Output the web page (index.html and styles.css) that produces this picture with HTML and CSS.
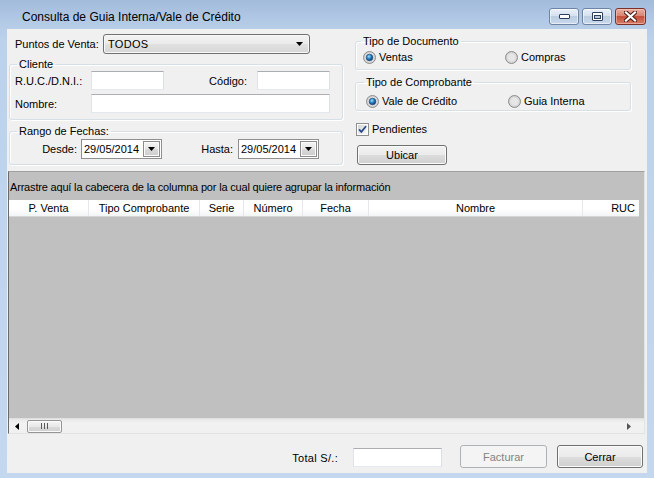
FILE: index.html
```html
<!DOCTYPE html>
<html lang="es">
<head>
<meta charset="utf-8">
<title>Consulta de Guia Interna/Vale de Crédito</title>
<link rel="stylesheet" href="styles.css">
</head>
<body>
<div class="window">
  <div class="titlebar">
    <span class="title">Consulta de Guia Interna/Vale de Crédito</span>
    <div class="caption-btns">
      <span class="cbtn">
        <svg width="11" height="5" viewBox="0 0 11 5"><rect x="0.5" y="0.5" width="10" height="4" rx="0.5" fill="#fff" stroke="#2c3f5c"/></svg>
      </span>
      <span class="cbtn">
        <svg width="11" height="9" viewBox="0 0 11 9"><rect x="0.5" y="0.5" width="10" height="8" rx="0.5" fill="#fff" stroke="#2c3f5c"/><rect x="2.5" y="3.5" width="6" height="3" fill="#b8c9e0" stroke="#2c3f5c"/></svg>
      </span>
      <span class="cbtn close">
        <svg width="13" height="11" viewBox="0 0 13 11"><path d="M2 1.5 L11 9.5 M11 1.5 L2 9.5" stroke="#4a1a14" stroke-width="4.2" stroke-linecap="square"/><path d="M2 1.5 L11 9.5 M11 1.5 L2 9.5" stroke="#fff" stroke-width="2.2" stroke-linecap="square"/></svg>
      </span>
    </div>
  </div>

  <div class="client">
    <div class="top">
      <div class="left-col">
        <div class="pv-row">
          <span class="pv-lbl">Puntos de Venta:</span>
          <div class="combo">
            <span class="combo-text">TODOS</span>
            <svg class="combo-arrow" width="7" height="4" viewBox="0 0 7 4"><polygon points="0,0 7,0 3.5,4" fill="#000"/></svg>
          </div>
        </div>

        <fieldset class="group cliente">
          <legend>Cliente</legend>
          <div class="frow">
            <span class="lbl w76">R.U.C./D.N.I.:</span>
            <span class="tb w73"></span>
            <span class="lbl cod">Código:</span>
            <span class="tb w73"></span>
          </div>
          <div class="frow row2">
            <span class="lbl w76">Nombre:</span>
            <span class="tb nombre"></span>
          </div>
        </fieldset>

        <fieldset class="group fechas">
          <legend>Rango de Fechas:</legend>
          <div class="frow">
            <span class="lbl desde">Desde:</span>
            <div class="date">
              <span class="date-text">29/05/2014</span>
              <span class="dbtn"><svg width="7" height="4" viewBox="0 0 7 4"><polygon points="0,0 7,0 3.5,4" fill="#000"/></svg></span>
            </div>
            <span class="lbl hasta">Hasta:</span>
            <div class="date">
              <span class="date-text">29/05/2014</span>
              <span class="dbtn"><svg width="7" height="4" viewBox="0 0 7 4"><polygon points="0,0 7,0 3.5,4" fill="#000"/></svg></span>
            </div>
          </div>
        </fieldset>
      </div>

      <div class="right-col">
        <fieldset class="group tipo-doc">
          <legend>Tipo de Documento</legend>
          <div class="radios">
            <span class="radio first">
              <svg width="13" height="13" viewBox="0 0 13 13"><defs><radialGradient id="rbg" cx="50%" cy="50%" r="50%"><stop offset="0.3" stop-color="#f4f4f4"/><stop offset="1" stop-color="#c9c9c9"/></radialGradient><radialGradient id="rdot" cx="40%" cy="35%" r="65%"><stop offset="0" stop-color="#a6e3fb"/><stop offset="0.45" stop-color="#2f8fd0"/><stop offset="1" stop-color="#0d3a75"/></radialGradient></defs><circle cx="6.5" cy="6.5" r="6" fill="url(#rbg)" stroke="#8e8f8f"/><circle cx="6.5" cy="6.5" r="3.3" fill="url(#rdot)" stroke="#153e70" stroke-width="0.6"/></svg>
              Ventas
            </span>
            <span class="radio">
              <svg width="13" height="13" viewBox="0 0 13 13"><circle cx="6.5" cy="6.5" r="6" fill="url(#rbg)" stroke="#8e8f8f"/><circle cx="6.5" cy="6.5" r="3.5" fill="#e6e6e6"/></svg>
              Compras
            </span>
          </div>
        </fieldset>

        <fieldset class="group tipo-comp">
          <legend>Tipo de Comprobante</legend>
          <div class="radios">
            <span class="radio first">
              <svg width="13" height="13" viewBox="0 0 13 13"><circle cx="6.5" cy="6.5" r="6" fill="url(#rbg)" stroke="#8e8f8f"/><circle cx="6.5" cy="6.5" r="3.3" fill="url(#rdot)" stroke="#153e70" stroke-width="0.6"/></svg>
              Vale de Crédito
            </span>
            <span class="radio">
              <svg width="13" height="13" viewBox="0 0 13 13"><circle cx="6.5" cy="6.5" r="6" fill="url(#rbg)" stroke="#8e8f8f"/><circle cx="6.5" cy="6.5" r="3.5" fill="#e6e6e6"/></svg>
              Guia Interna
            </span>
          </div>
        </fieldset>

        <div class="check">
          <svg width="13" height="13" viewBox="0 0 13 13"><defs><linearGradient id="cbg" x1="0" y1="0" x2="1" y2="1"><stop offset="0" stop-color="#d2d4d6"/><stop offset="1" stop-color="#fbfbfb"/></linearGradient></defs><rect x="0.5" y="0.5" width="12" height="12" fill="#fff" stroke="#8e8f8f"/><rect x="2" y="2" width="9" height="9" fill="url(#cbg)"/><path d="M3 6.3 L5.4 8.9 L10 3.3" fill="none" stroke="#2b4a8b" stroke-width="1.8"/></svg>
          <span>Pendientes</span>
        </div>

        <div class="btn ubicar">Ubicar</div>
      </div>
    </div>

    <div class="grid">
      <div class="group-panel">Arrastre aquí la cabecera de la columna por la cual quiere agrupar la información</div>
      <div class="header">
        <span class="hc c1">P. Venta</span>
        <span class="hc c2">Tipo Comprobante</span>
        <span class="hc c3">Serie</span>
        <span class="hc c4">Número</span>
        <span class="hc c5">Fecha</span>
        <span class="hc c6">Nombre</span>
        <span class="hc c7">RUC</span>
      </div>
      <div class="grid-body"></div>
      <div class="hscroll">
        <span class="sarrow left"><svg width="4" height="7" viewBox="0 0 4 7"><polygon points="4,0 4,7 0,3.5" fill="#000"/></svg></span>
        <span class="thumb"><svg width="7" height="6" viewBox="0 0 7 6"><path d="M0.5 0 V6 M3.5 0 V6 M6.5 0 V6" stroke="#5a5a5a"/></svg></span>
        <span class="sspace"></span>
        <span class="sarrow right"><svg width="4" height="7" viewBox="0 0 4 7"><polygon points="0,0 0,7 4,3.5" fill="#555"/></svg></span>
      </div>
    </div>

    <div class="footer">
      <span class="total-lbl">Total S/.:</span>
      <span class="tb total"></span>
      <div class="btn disabled facturar">Facturar</div>
      <div class="btn cerrar">Cerrar</div>
    </div>
  </div>
</div>
</body>
</html>
```

FILE: styles.css
```css
* { box-sizing: border-box; }
html, body { margin: 0; padding: 0; }
body {
  width: 654px;
  height: 478px;
  overflow: hidden;
  font-family: "Liberation Sans", Arial, sans-serif;
  font-size: 11px;
  color: #000;
}

.window {
  width: 654px;
  height: 478px;
  display: flex;
  flex-direction: column;
  background: linear-gradient(#a2bbdb 0, #b2c9e5 20px, #bcd2eb 40px, #c3d8ef 100%);
}

/* Title bar */
.titlebar {
  flex: none;
  height: 29px;
  display: flex;
  justify-content: space-between;
  align-items: flex-start;
  padding: 0 8px 0 22px;
}
.title {
  font-size: 12px;
  line-height: 16px;
  margin-top: 9px;
  color: #000;
}
.caption-btns {
  display: flex;
  gap: 3px;
  margin-top: 8px;
}
.cbtn {
  width: 30px;
  height: 17px;
  border: 1px solid #6f84a3;
  border-radius: 3px;
  display: flex;
  align-items: center;
  justify-content: center;
  background: linear-gradient(#eaf0f8, #d6e1ef 45%, #bccde2 50%, #cad9ec);
  box-shadow: inset 0 0 0 1px rgba(255,255,255,0.55);
}
.cbtn.close {
  width: 31px;
  border-color: #7b3127;
  background: linear-gradient(#e9b0a2, #d98572 45%, #c5503b 50%, #d57d68);
  box-shadow: inset 0 0 0 1px rgba(255,210,200,0.5);
}

/* Client area */
.client {
  flex: 1;
  margin: 0 7px 5px 7px;
  background: #f0f0f0;
  display: flex;
  flex-direction: column;
}
.top {
  flex: none;
  height: 142px;
  display: flex;
}
.left-col {
  width: 334px;
  margin-left: 2px;
  padding-top: 5px;
}
.right-col {
  width: 276px;
  margin-left: 12px;
  padding-top: 6px;
}

.pv-row {
  height: 20px;
  display: flex;
  align-items: center;
}
.pv-lbl {
  width: 88px;
  margin-left: 6px;
}
.combo {
  width: 207px;
  height: 20px;
  border: 1px solid #707070;
  border-radius: 3px;
  background: linear-gradient(#f3f3f3, #ebebeb 50%, #e1e1e1 50%, #d6d6d6);
  display: flex;
  align-items: center;
  justify-content: space-between;
  padding: 0 6px 0 4px;
  box-shadow: inset 0 0 0 1px #f8f8f8;
}
.combo-text { font-size: 11px; letter-spacing: 0.3px; }

/* Group boxes */
fieldset.group {
  margin: 0;
  min-width: 0;
  border: 1px solid #d5dfe5;
  border-radius: 3px;
  box-shadow: inset 1px 1px 0 #fff, 1px 1px 0 #fff;
}
fieldset.group legend {
  font-size: 11px;
  line-height: 12px;
  padding: 0 2px;
  margin-left: 2px;
}
.cliente {
  margin-top: 4px !important;
  padding: 1px 0 6px 5px;
}
.fechas {
  margin-top: 5px !important;
  padding: 2px 0 5px 5px;
}
.frow {
  display: flex;
  align-items: center;
  height: 19px;
}
.frow.row2 { margin-top: 4px; }
.fechas .frow { height: 20px; }
.w76 { width: 76px; }
.w73 { width: 73px; }
.cod {
  width: 93px;
  text-align: right;
  padding-right: 10px;
}
.tb {
  display: block;
  height: 19px;
  background: #fff;
  border: 1px solid;
  border-color: #abadb3 #dbdfe6 #e3e9ef #e2e3ea;
}
.nombre { width: 239px; }

.desde {
  width: 66px;
  text-align: right;
  padding-right: 4px;
}
.hasta {
  width: 76px;
  text-align: right;
  padding-right: 5px;
}
.date {
  width: 81px;
  height: 20px;
  background: #fff;
  border: 1px solid #8f8f8f;
  display: flex;
  align-items: center;
  justify-content: space-between;
  padding: 0 1px 0 1px;
}
.date-text { padding-left: 1px; }
.dbtn {
  width: 17px;
  height: 16px;
  border: 1px solid #8c8c8c;
  background: linear-gradient(#f4f4f4, #e6e6e6 50%, #d9d9d9 50%, #cdcdcd);
  display: flex;
  align-items: center;
  justify-content: center;
  box-shadow: inset 0 0 0 1px #fafafa;
}

.tipo-doc {
  padding: 3px 0 5px 7px;
}
.tipo-doc legend { margin-left: -2px !important; }
.tipo-comp {
  margin-top: 6px !important;
  padding: 6px 0 2px 10px;
}
.tipo-comp legend { margin-left: -2px !important; }
.radios {
  display: flex;
  height: 14px;
  align-items: center;
}
.radio {
  display: flex;
  align-items: center;
  gap: 3px;
}
.radio.first { width: 142px; }

.check {
  margin-top: 11px;
  margin-left: 1px;
  height: 14px;
  display: flex;
  align-items: center;
  gap: 3px;
}

.btn {
  height: 20px;
  border: 1px solid #707070;
  border-radius: 3px;
  background: linear-gradient(#f2f2f2, #ebebeb 50%, #dddddd 50%, #cfcfcf);
  box-shadow: inset 0 0 0 1px #fbfbfb;
  display: flex;
  align-items: center;
  justify-content: center;
}
.ubicar {
  width: 90px;
  margin-top: 9px;
  margin-left: 2px;
}

/* Grid */
.grid {
  flex: none;
  margin-left: 1px;
  width: 637px;
  height: 263px;
  border-style: solid;
  border-width: 1px;
  border-color: #a0a0a0 #e3e3e3 #e3e3e3 #6a6a6a;
  background: #c0c0c0;
  display: flex;
  flex-direction: column;
}
.group-panel {
  height: 28px;
  display: flex;
  align-items: center;
  padding: 1px 0 0 1px;
  letter-spacing: -0.18px;
}
.header {
  height: 17px;
  width: 630px;
  display: flex;
  background: linear-gradient(#ffffff, #ffffff 55%, #f3f4f6);
  border-bottom: 1px solid #d5d5d5;
}
.hc {
  display: flex;
  align-items: center;
  justify-content: center;
  height: 16px;
  border-left: 1px solid #e6e7ea;
}
.c1 { width: 79px; border-left: none; }
.c2 { width: 111px; }
.c3 { width: 44px; }
.c4 { width: 59px; }
.c5 { width: 66px; }
.c6 { width: 214px; }
.c7 { width: 57px; justify-content: flex-end; padding-right: 4px; }
.grid-body { flex: 1; }
.hscroll {
  height: 15px;
  background: linear-gradient(#e8e8e8, #f2f2f2 30%, #f0f0f0);
  border-top: 1px solid #e0e0e0;
  display: flex;
  align-items: center;
}
.sarrow {
  display: flex;
  align-items: center;
  justify-content: center;
}
.sarrow.left { width: 17px; padding-right: 2px; }
.sarrow.right { width: 12px; margin-right: 9px; }
.thumb {
  width: 35px;
  height: 13px;
  margin-left: 1px;
  border: 1px solid #959595;
  border-radius: 2px;
  background: linear-gradient(#f5f5f5, #e8e8e8 50%, #dadada 50%, #d0d0d0);
  box-shadow: inset 0 0 0 1px #fafafa;
  display: flex;
  align-items: center;
  justify-content: center;
}
.sspace { flex: 1; }

/* Footer */
.footer {
  flex: 1;
  display: flex;
  justify-content: flex-end;
  align-items: flex-start;
  padding: 11px 4px 4px 0;
}
.footer > * { flex: none; }
.total-lbl {
  margin-right: 15px;
  margin-top: 7px;
  letter-spacing: 0.3px;
}
.tb.total {
  width: 89px;
  margin-top: 3px;
  margin-right: 18px;
}
.facturar {
  width: 87px;
  height: 23px;
  margin-right: 10px;
  border-color: #adb2b5;
  background: #f4f4f4;
  color: #838383;
  box-shadow: none;
}
.cerrar {
  width: 86px;
  height: 23px;
}
```
